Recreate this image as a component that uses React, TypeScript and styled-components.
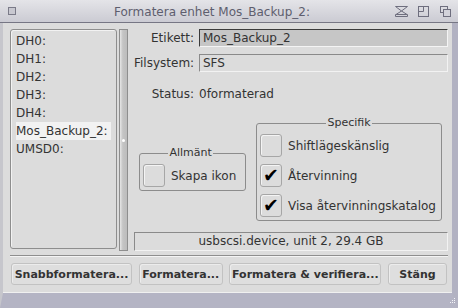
import styled, { createGlobalStyle } from "styled-components";

const Global = createGlobalStyle`
  html, body { margin: 0; padding: 0; }
  body { background: #dcdcdc; font-family: "DejaVu Sans", "Liberation Sans", sans-serif; }
`;

const devices = ["DH0:", "DH1:", "DH2:", "DH3:", "DH4:", "Mos_Backup_2:", "UMSD0:"];

const Window = styled.div`
  width: 458px;
  height: 308px;
  display: flex;
  flex-direction: column;
  background: #dcdcdc;
  color: #333;
  font-size: 12px;
  overflow: hidden;
`;

const TitleBar = styled.div`
  height: 22px;
  flex: none;
  display: flex;
  align-items: center;
  padding: 0 6px 0 8px;
  background: linear-gradient(#e4e4e8, #cbcbd3);
  border-bottom: 1px solid #767684;
  color: #5e5e6e;
`;

const Title = styled.div`
  flex: 1;
  text-align: center;
  font-size: 12px;
  padding-left: 12px;
  padding-top: 1px;
`;

const Gadgets = styled.div`
  display: flex;
  gap: 10px;
  align-items: center;
`;

const Frame = styled.div`
  flex: 1;
  display: flex;
  flex-direction: column;
  border-left: 3px solid #c6c6cc;
  border-right: 6px solid #b2b2c2;
  border-bottom: 15px solid #b4b4c4;
  box-shadow: inset 0 -1px #f0f0f0;
  position: relative;
`;

const Content = styled.div`
  flex: 1;
  display: flex;
  flex-direction: column;
  padding: 6px 4px 8px 7px;
`;

const TopRow = styled.div`
  height: 222px;
  display: flex;
`;

const DeviceList = styled.div`
  width: 107px;
  height: 220px;
  box-sizing: border-box;
  border: 1px solid #8e8e8e;
  border-radius: 3px;
  box-shadow: inset 1px 1px #f2f2f2;
  padding: 2px 5px;
`;

const DeviceRow = styled.div<{ $active?: boolean }>`
  height: 18px;
  line-height: 18px;
  background: ${(p) => (p.$active ? "#f2f2f2" : "transparent")};
  white-space: nowrap;
`;

const Divider = styled.div`
  width: 9px;
  margin-left: 2px;
  box-sizing: border-box;
  border: 1px solid #8e8e8e;
  background: linear-gradient(90deg, #e6e6e6, #c4c4c4 40%, #bcbcbc);
  position: relative;
  &::after {
    content: "";
    position: absolute;
    left: 2px;
    top: 109px;
    width: 3px;
    height: 3px;
    border-radius: 50%;
    background: #fff;
  }
`;

const Side = styled.div`
  flex: 1;
  margin-left: 6px;
  display: flex;
  flex-direction: column;
`;

const FieldRow = styled.div`
  display: flex;
  align-items: center;
  height: 18px;
  margin-bottom: 7px;
`;

const Label = styled.div`
  width: 60px;
  text-align: right;
  margin-right: 5px;
  white-space: nowrap;
`;

const Field = styled.div<{ $active?: boolean }>`
  flex: 1;
  height: 18px;
  box-sizing: border-box;
  padding-left: 3px;
  line-height: 16px;
  background: ${(p) => (p.$active ? "#c6c6c6" : "#dcdcdc")};
  border: 1px solid;
  border-color: ${(p) =>
    p.$active ? "#3a3a3a #f4f4f4 #f4f4f4 #3a3a3a" : "#8a8a8a #f2f2f2 #f2f2f2 #8a8a8a"};
`;

const StatusRow = styled.div`
  display: flex;
  height: 18px;
  line-height: 18px;
  margin-top: 6px;
`;

const Groups = styled.div`
  display: flex;
  justify-content: space-between;
  align-items: center;
  padding: 0 6px 0 5px;
  margin-top: 14px;
`;

const Group = styled.fieldset<{ $padRight?: number }>`
  margin: 0;
  padding: 5px ${(p) => p.$padRight ?? 3}px 3px 3px;
  border: 1px solid #8c8c8c;
  border-radius: 3px;
  display: flex;
  flex-direction: column;
  gap: 7px;
  min-width: 0;
`;

const Legend = styled.legend`
  margin: 0 auto;
  padding: 0 1px;
  font-size: 11px;
  line-height: 12px;
  color: #333;
`;

const CheckRow = styled.div`
  display: flex;
  align-items: center;
  gap: 6px;
  padding-right: 2px;
`;

const Box = styled.div`
  width: 22px;
  height: 23px;
  box-sizing: border-box;
  border: 1px solid #a6a6a6;
  border-radius: 3px;
  background: #dcdcdc;
  box-shadow: inset 1px 1px #f4f4f4;
  display: flex;
  align-items: center;
  justify-content: center;
  font-size: 19px;
  line-height: 1;
  font-weight: bold;
  color: #000;
`;

const DeviceInfo = styled.div`
  margin-top: auto;
  height: 19px;
  box-sizing: border-box;
  border: 1px solid;
  border-color: #8a8a8a #f2f2f2 #f2f2f2 #8a8a8a;
  text-align: center;
  line-height: 17px;
`;

const Separator = styled.div`
  margin-top: 4px;
  height: 1px;
  background: #8e8e8e;
  border-bottom: 1px solid #f4f4f4;
`;

const Buttons = styled.div`
  margin-top: 6px;
  display: flex;
  justify-content: space-between;
  padding: 0 1px;
`;

const Button = styled.button<{ $w: number }>`
  width: ${(p) => p.$w}px;
  flex: none;
  height: 22px;
  padding: 0;
  font-family: "DejaVu Sans", "Liberation Sans", sans-serif;
  font-size: 11px;
  font-weight: bold;
  color: #333;
  background: #dedede;
  border: 1px solid #c2c2c2;
  border-radius: 3px;
  box-shadow: inset 1px 1px #ececec;
  white-space: nowrap;
`;

const Resize = styled.svg`
  position: absolute;
  right: -4px;
  bottom: -13px;
`;

function Check({ on }: { on?: boolean }) {
  return <Box>{on ? "✔" : null}</Box>;
}

export default function App() {
  return (
    <>
      <Global />
      <Window>
        <TitleBar>
          <svg width="9" height="9" viewBox="0 0 9 9">
            <rect x="0.5" y="0.5" width="7" height="7" fill="#c8c8d0" stroke="#7a7a88" />
          </svg>
          <Title>Formatera enhet Mos_Backup_2:</Title>
          <Gadgets>
            <svg width="13" height="11" viewBox="0 0 13 11" fill="none" stroke="#6e6e7e">
              <path d="M0.5 0.5H12.5L6.5 5L0.5 0.5Z M6.5 5L1 8.5H12L6.5 5 M0.5 8.5H12.5V10.5H0.5Z" />
            </svg>
            <svg width="12" height="11" viewBox="0 0 12 11" fill="none" stroke="#6e6e7e">
              <rect x="0.5" y="0.5" width="10" height="10" />
              <path d="M5.5 0.5V5.5H0.5" />
            </svg>
            <svg width="12" height="11" viewBox="0 0 12 11" fill="none" stroke="#6e6e7e">
              <rect x="0.5" y="0.5" width="7" height="6" />
              <rect x="3.5" y="3.5" width="7" height="7" fill="#d2d2da" />
            </svg>
          </Gadgets>
        </TitleBar>
        <Frame>
          <Content>
            <TopRow>
              <DeviceList>
                {devices.map((d) => (
                  <DeviceRow key={d} $active={d === "Mos_Backup_2:"}>
                    {d}
                  </DeviceRow>
                ))}
              </DeviceList>
              <Divider />
              <Side>
                <FieldRow>
                  <Label>Etikett:</Label>
                  <Field $active>Mos_Backup_2</Field>
                </FieldRow>
                <FieldRow>
                  <Label>Filsystem:</Label>
                  <Field>SFS</Field>
                </FieldRow>
                <StatusRow>
                  <Label>Status:</Label>
                  <div>0formaterad</div>
                </StatusRow>
                <Groups>
                  <Group $padRight={7}>
                    <Legend>Allmänt</Legend>
                    <CheckRow>
                      <Check />
                      Skapa ikon
                    </CheckRow>
                  </Group>
                  <Group>
                    <Legend>Specifik</Legend>
                    <CheckRow>
                      <Check />
                      Shiftlägeskänslig
                    </CheckRow>
                    <CheckRow>
                      <Check on />
                      Återvinning
                    </CheckRow>
                    <CheckRow>
                      <Check on />
                      Visa återvinningskatalog
                    </CheckRow>
                  </Group>
                </Groups>
                <DeviceInfo>usbscsi.device, unit 2, 29.4 GB</DeviceInfo>
              </Side>
            </TopRow>
            <Separator />
            <Buttons>
              <Button $w={121}>Snabbformatera...</Button>
              <Button $w={84}>Formatera...</Button>
              <Button $w={152}>Formatera &amp; verifiera...</Button>
              <Button $w={59}>Stäng</Button>
            </Buttons>
          </Content>
          <Resize width="9" height="9" viewBox="0 0 9 9" fill="#f4f4f8">
            <rect x="7" y="1" width="1" height="1" />
            <rect x="5" y="3" width="1" height="1" />
            <rect x="7" y="3" width="1" height="1" />
            <rect x="3" y="5" width="1" height="1" />
            <rect x="5" y="5" width="1" height="1" />
            <rect x="7" y="5" width="1" height="1" />
          </Resize>
        </Frame>
      </Window>
    </>
  );
}
